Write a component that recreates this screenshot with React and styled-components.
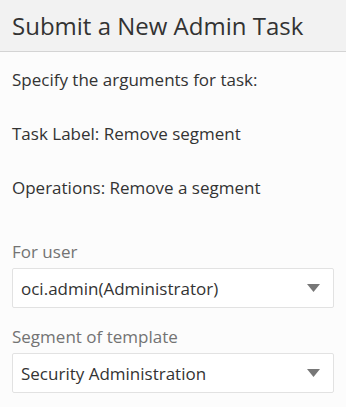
import React from "react";
import styled, { createGlobalStyle } from "styled-components";

const Global = createGlobalStyle`
  html, body { margin: 0; padding: 0; background: #fcfcfc; }
  body { font-family: "Open Sans", "Noto Sans", sans-serif; color: #333; }
`;

const Page = styled.div`
  display: flex;
  flex-direction: column;
  width: 346px;
`;

const Header = styled.header`
  display: flex;
  align-items: center;
  height: 51px;
  padding: 0 12px;
  background: #f2f2f2;
  border-bottom: 1px solid #d4d4d4;
`;

const Title = styled.h1`
  margin: 0;
  font-size: 24px;
  font-weight: 400;
  color: #333;
  line-height: 30px;
`;

const Body = styled.main`
  display: flex;
  flex-direction: column;
  padding: 16px 12px 0;
`;

const Para = styled.p`
  margin: 0 0 30px;
  font-size: 17px;
  line-height: 24px;
  color: #333;
`;

const Field = styled.div`
  display: flex;
  flex-direction: column;
  gap: 5px;
  margin-top: ${(p) => p.$top || 0}px;
`;

const Label = styled.label`
  font-size: 17px;
  line-height: 23px;
  color: #737373;
`;

const SelectBox = styled.div`
  display: flex;
  align-items: center;
  justify-content: space-between;
  height: 38px;
  padding: 0 13px 0 8px;
  background: #fff;
  border: 1px solid #e2e2e2;
  border-radius: 2px;
  font-size: 17px;
  color: #333;
`;

const Arrow = () => (
  <svg width="13" height="8" viewBox="0 0 13 8">
    <path d="M0 0H13L6.5 8Z" fill="#777" />
  </svg>
);

const Select = ({ value }) => (
  <SelectBox>
    <span>{value}</span>
    <Arrow />
  </SelectBox>
);

export default function App() {
  return (
    <Page>
      <Global />
      <Header>
        <Title>Submit a New Admin Task</Title>
      </Header>
      <Body>
        <Para>Specify the arguments for task:</Para>
        <Para>Task Label: Remove segment</Para>
        <Para>Operations: Remove a segment</Para>
        <Field $top={10}>
          <Label>For user</Label>
          <Select value="oci.admin(Administrator)" />
        </Field>
        <Field $top={17}>
          <Label>Segment of template</Label>
          <Select value="Security Administration" />
        </Field>
      </Body>
    </Page>
  );
}
